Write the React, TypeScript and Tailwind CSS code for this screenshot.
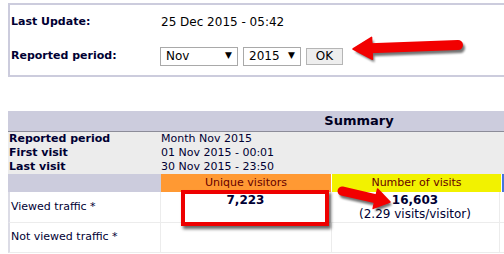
const font = "font-['DejaVu_Sans',Verdana,sans-serif]";

const Arrow = ({ tail, tip, headLen = 18, headHalf = 11, shaft = 10 }: { tail: [number, number]; tip: [number, number]; headLen?: number; headHalf?: number; shaft?: number }) => {
  const [tx, ty] = tail;
  const [px, py] = tip;
  const dx = px - tx;
  const dy = py - ty;
  const len = Math.hypot(dx, dy);
  const ux = dx / len;
  const uy = dy / len;
  const nx = -uy;
  const ny = ux;
  const bx = px - ux * headLen;
  const by = py - uy * headLen;
  const head = `${px},${py} ${bx + nx * headHalf},${by + ny * headHalf} ${bx - nx * headHalf},${by - ny * headHalf}`;
  const shaftEnd = [bx + ux * 2, by + uy * 2];
  return (
    <g>
      <g transform="translate(2,3)" opacity="0.55" filter="url(#blur)">
        <line x1={tx} y1={ty} x2={shaftEnd[0]} y2={shaftEnd[1]} stroke="#000" strokeWidth={shaft} strokeLinecap="round" />
        <polygon points={head} fill="#000" />
      </g>
      <line x1={tx} y1={ty} x2={shaftEnd[0]} y2={shaftEnd[1]} stroke="#f20000" strokeWidth={shaft} strokeLinecap="round" />
      <polygon points={head} fill="#f20000" stroke="#f20000" strokeWidth="1.5" strokeLinejoin="round" />
    </g>
  );
};

const Select = ({ value, width }: { value: string; width: string }) => (
  <div className={`${width} h-[19px] border border-[#a9a9a9] bg-white flex items-center justify-between pl-[5px] pr-[5px] text-[12px] text-black`}>
    <span>{value}</span>
    <span className="text-[9px]">▼</span>
  </div>
);

export default function App() {
  return (
    <div className={`relative w-[504px] h-[254px] overflow-hidden bg-white ${font} text-[#000033]`}>
      {/* update / period form */}
      <div className="ml-[8px] mt-[3px] w-[600px] h-[74px] border-2 border-[#ccccdd] flex flex-col">
        <div className="flex items-center h-[34px]">
          <div className="w-[151px] pl-[1px] text-[11px] font-bold">Last Update:</div>
          <div className="text-[12px] text-black">25 Dec 2015 - 05:42</div>
        </div>
        <div className="flex items-center h-[34px]">
          <div className="w-[150px] pl-[1px] text-[11px] font-bold">Reported period:</div>
          <div className="flex items-center gap-[5px]">
            <Select value="Nov" width="w-[78px]" />
            <Select value="2015" width="w-[58px]" />
            <button className="h-[17px] w-[37px] border border-[#b5b5b5] bg-[#eeeeee] text-[12px] text-black leading-none">OK</button>
          </div>
        </div>
      </div>

      {/* summary table */}
      <div className="ml-[8px] mt-[34px] w-[702px] text-[11px]">
        <div className="h-[21px] bg-[#ccccdd] border-b border-[#8c8c99] flex items-center justify-center font-bold text-[13px] text-[#000022]">Summary</div>
        <div className="bg-[#ececec]">
          <div className="flex h-[14px] items-center">
            <div className="w-[153px] pl-[1px] font-bold">Reported period</div>
            <div>Month Nov 2015</div>
          </div>
          <div className="flex h-[14px] items-center">
            <div className="w-[153px] pl-[1px] font-bold">First visit</div>
            <div>01 Nov 2015 - 00:01</div>
          </div>
          <div className="flex h-[14px] items-center">
            <div className="w-[153px] pl-[1px] font-bold">Last visit</div>
            <div>30 Nov 2015 - 23:50</div>
          </div>
        </div>
        <div className="flex h-[18px] text-[#660000]">
          <div className="w-[153px] bg-[#ccccdd]" />
          <div className="w-[170px] bg-[#ff9933] flex items-center justify-center">Unique visitors</div>
          <div className="w-[169px] bg-[#f2f200] ml-[1px] flex items-center justify-center">Number of visits</div>
          <div className="flex-1 bg-[#4477dd] ml-[1px]" />
        </div>
        <div className="flex h-[31px] border-b border-[#ececec] border-l-2 border-l-[#dcdce6]">
          <div className="w-[151px] border-r border-[#ececec] flex items-center pl-[1px]">Viewed traffic *</div>
          <div className="w-[170px] border-r border-[#ececec] flex justify-center pt-[1px] font-bold text-[12px] leading-[14px]">7,223</div>
          <div className="w-[169px] border-r border-[#ececec] flex flex-col items-center pt-[1px] text-[12px]">
            <span className="font-bold leading-[14px]">16,603</span>
            <span className="leading-[15px]">(2.29 visits/visitor)</span>
          </div>
          <div className="flex-1" />
        </div>
        <div className="flex h-[30px] border-b border-[#ececec] border-l-2 border-l-[#dcdce6]">
          <div className="w-[151px] border-r border-[#ececec] flex items-center pl-[1px]">Not viewed traffic *</div>
          <div className="w-[170px]" />
          <div className="w-[169px] border-l border-r border-[#ececec]" />
          <div className="flex-1" />
        </div>
      </div>

      {/* red highlight box */}
      <div className="absolute left-[181px] top-[190px] w-[148px] h-[36px] border-[4px] border-[#ee0000] shadow-[2px_3px_3px_rgba(0,0,0,0.6)]" />

      <svg className="absolute left-0 top-0 pointer-events-none" width="504" height="254">
        <defs>
          <filter id="blur" x="-20%" y="-50%" width="140%" height="200%">
            <feGaussianBlur stdDeviation="1.2" />
          </filter>
        </defs>
        <Arrow tail={[458, 45]} tip={[353, 49]} headLen={19} headHalf={11} shaft={10} />
        <Arrow tail={[342, 191]} tip={[390, 202]} headLen={15} headHalf={10} shaft={9} />
      </svg>
    </div>
  );
}
